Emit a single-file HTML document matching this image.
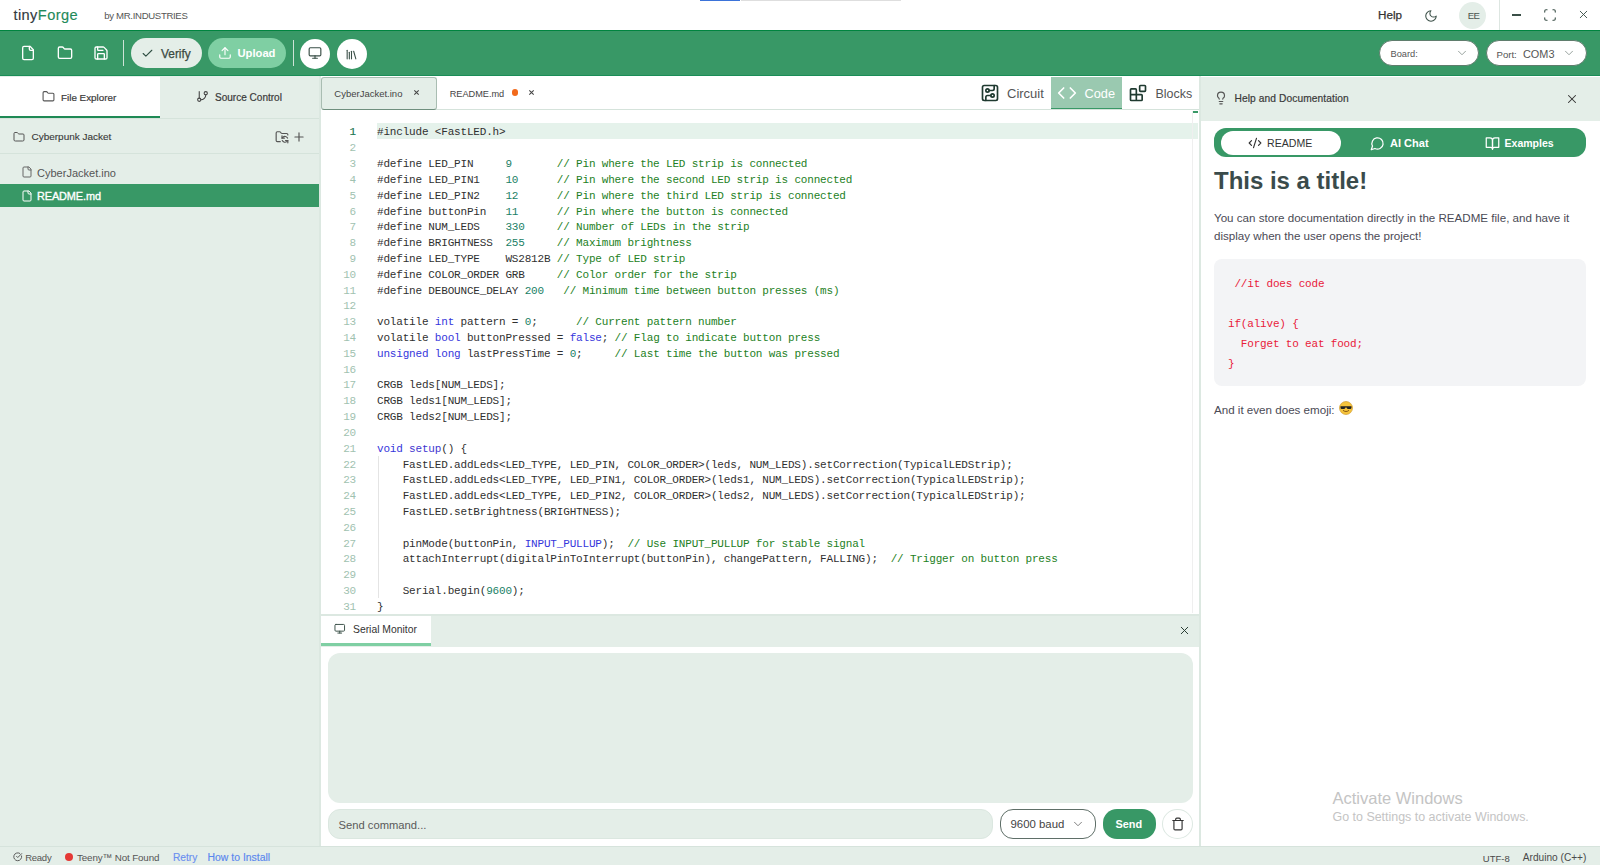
<!DOCTYPE html>
<html><head><meta charset="utf-8"><title>tinyForge</title>
<style>
html,body{margin:0;padding:0;width:1600px;height:865px;overflow:hidden;background:#fff;position:relative;font-family:'Liberation Sans', sans-serif}
.t{position:absolute;white-space:pre;line-height:normal}
.b{position:absolute}
.i{position:absolute;overflow:visible}
</style></head><body>
<div class="b" style="left:700px;top:0px;width:40px;height:1px;background:#3b73d9"></div>
<div class="b" style="left:741px;top:0px;width:160px;height:1px;background:#dedede"></div>
<div class="t" style="left:13.50px;top:7.09px;font-size:14.6px;color:#333a40;font-weight:400;font-family:'Liberation Sans', sans-serif;-webkit-text-stroke:0.15px;letter-spacing:0.4px">tiny<span style="color:#1f8a5a">Forge</span></div>
<div class="t" style="left:104.30px;top:10.11px;font-size:9.6px;color:#555;font-weight:400;font-family:'Liberation Sans', sans-serif;letter-spacing:-0.33px">by MR.INDUSTRIES</div>
<div class="t" style="left:1378.00px;top:8.19px;font-size:11.67px;color:#333;font-weight:400;font-family:'Liberation Sans', sans-serif;-webkit-text-stroke:0.25px">Help</div>
<svg class="i" style="left:1424px;top:8.5px;" width="14" height="14" viewBox="0 0 24 24" fill="none" stroke="#3a4f47" stroke-width="1.8" stroke-linecap="round" stroke-linejoin="round"><path d="M12 3a6 6 0 0 0 9 9 9 9 0 1 1-9-9Z"/></svg>
<div class="b" style="left:1459px;top:2px;width:27px;height:27px;background:#e4eee8;border-radius:50%"></div>
<div class="t" style="left:1467.80px;top:9.91px;font-size:9.6px;color:#4a5550;font-weight:400;font-family:'Liberation Sans', sans-serif;letter-spacing:-0.6px">EE</div>
<div class="b" style="left:1499px;top:0px;width:1px;height:30px;background:#dde6e1"></div>
<div class="b" style="left:1512px;top:14.3px;width:9px;height:1.3px;background:#3a4f47"></div>
<svg class="i" style="left:1543px;top:8px;" width="14" height="14" viewBox="0 0 24 24" fill="none" stroke="#3a4f47" stroke-width="1.9" stroke-linecap="round" stroke-linejoin="round"><path d="M3 7V5a2 2 0 0 1 2-2h2"/><path d="M17 3h2a2 2 0 0 1 2 2v2"/><path d="M21 17v2a2 2 0 0 1-2 2h-2"/><path d="M7 21H5a2 2 0 0 1-2-2v-2"/></svg>
<svg class="i" style="left:1577px;top:8px;" width="13" height="13" viewBox="0 0 24 24" fill="none" stroke="#3a4f47" stroke-width="1.7" stroke-linecap="round" stroke-linejoin="round"><path d="M18 6 6 18"/><path d="m6 6 12 12"/></svg>
<div class="b" style="left:0px;top:30px;width:1600px;height:46px;background:#389866;border-top:1px solid #00843f;border-bottom:1px solid #1a8d57;box-sizing:border-box"></div>
<svg class="i" style="left:20px;top:45px;" width="16" height="16" viewBox="0 0 24 24" fill="none" stroke="#fff" stroke-width="2" stroke-linecap="round" stroke-linejoin="round"><path d="M15 2H6a2 2 0 0 0-2 2v16a2 2 0 0 0 2 2h12a2 2 0 0 0 2-2V7Z"/><path d="M14 2v4a2 2 0 0 0 2 2h4"/></svg>
<svg class="i" style="left:57px;top:45px;" width="16" height="16" viewBox="0 0 24 24" fill="none" stroke="#fff" stroke-width="2" stroke-linecap="round" stroke-linejoin="round"><path d="M20 20a2 2 0 0 0 2-2V8a2 2 0 0 0-2-2h-7.9a2 2 0 0 1-1.69-.9L9.6 3.9A2 2 0 0 0 7.93 3H4a2 2 0 0 0-2 2v13a2 2 0 0 0 2 2Z"/></svg>
<svg class="i" style="left:93px;top:45px;" width="16" height="16" viewBox="0 0 24 24" fill="none" stroke="#fff" stroke-width="2" stroke-linecap="round" stroke-linejoin="round"><path d="M15.2 3a2 2 0 0 1 1.4.6l3.8 3.8a2 2 0 0 1 .6 1.4V19a2 2 0 0 1-2 2H5a2 2 0 0 1-2-2V5a2 2 0 0 1 2-2z"/><path d="M17 21v-7a1 1 0 0 0-1-1H8a1 1 0 0 0-1 1v7"/><path d="M7 3v4a1 1 0 0 0 1 1h7"/></svg>
<div class="b" style="left:123px;top:40px;width:1px;height:26px;background:#cfe3d7"></div>
<div class="b" style="left:131px;top:38px;width:71px;height:30px;background:#e4eee8;border-radius:15px"></div>
<svg class="i" style="left:141px;top:47px;" width="13" height="13" viewBox="0 0 24 24" fill="none" stroke="#2f4f43" stroke-width="2" stroke-linecap="round" stroke-linejoin="round"><path d="M20 6 9 17l-5-5"/></svg>
<div class="t" style="left:161.00px;top:46.63px;font-size:11.9px;color:#3a4a42;font-weight:400;font-family:'Liberation Sans', sans-serif;-webkit-text-stroke:0.25px;letter-spacing:0px">Verify</div>
<div class="b" style="left:208px;top:38px;width:78px;height:30px;background:#7fcfa3;border-radius:15px"></div>
<svg class="i" style="left:218px;top:46px;" width="14" height="14" viewBox="0 0 24 24" fill="none" stroke="#fff" stroke-width="2" stroke-linecap="round" stroke-linejoin="round"><path d="M21 15v4a2 2 0 0 1-2 2H5a2 2 0 0 1-2-2v-4"/><polyline points="17 8 12 3 7 8"/><line x1="12" x2="12" y1="3" y2="15"/></svg>
<div class="t" style="left:237.50px;top:47.05px;font-size:11.21px;color:#fff;font-weight:700;font-family:'Liberation Sans', sans-serif;">Upload</div>
<div class="b" style="left:293px;top:40px;width:1px;height:26px;background:#cfe3d7"></div>
<div class="b" style="left:299.8px;top:38.5px;width:30.2px;height:30.2px;background:#fff;border-radius:50%"></div>
<svg class="i" style="left:308px;top:46.2px;" width="14" height="14" viewBox="0 0 24 24" fill="none" stroke="#3a4f47" stroke-width="2" stroke-linecap="round" stroke-linejoin="round"><rect width="20" height="14" x="2" y="3" rx="2"/><line x1="8" x2="16" y1="21" y2="21"/><line x1="12" x2="12" y1="17" y2="21"/></svg>
<div class="b" style="left:336.5px;top:38.5px;width:30.2px;height:30.2px;background:#fff;border-radius:50%"></div>
<svg class="i" style="left:344.9px;top:47.5px;" width="13" height="13" viewBox="0 0 24 24" fill="none" stroke="#3a4f47" stroke-width="2" stroke-linecap="round" stroke-linejoin="round"><path d="m16 6 4 14"/><path d="M12 6v14"/><path d="M8 8v12"/><path d="M4 4v16"/></svg>
<div class="b" style="left:1379px;top:40.3px;width:100px;height:26.2px;background:#fff;border-radius:13px;border:1px solid #5f7d6d;box-sizing:border-box"></div>
<div class="t" style="left:1390.50px;top:49.31px;font-size:9.27px;color:#555;font-weight:400;font-family:'Liberation Sans', sans-serif;">Board:</div>
<svg class="i" style="left:1455px;top:46px;" width="14" height="14" viewBox="0 0 24 24" fill="none" stroke="#8a9690" stroke-width="1.5" stroke-linecap="round" stroke-linejoin="round"><path d="m6 9 6 6 6-6"/></svg>
<div class="b" style="left:1486px;top:40.3px;width:100.5px;height:26.2px;background:#fff;border-radius:13px;border:1px solid #5f7d6d;box-sizing:border-box"></div>
<div class="t" style="left:1496.50px;top:49.00px;font-size:9.61px;color:#555;font-weight:400;font-family:'Liberation Sans', sans-serif;">Port:</div>
<div class="t" style="left:1523.00px;top:47.84px;font-size:10.9px;color:#555;font-weight:400;font-family:'Liberation Sans', sans-serif;">COM3</div>
<svg class="i" style="left:1562px;top:46px;" width="14" height="14" viewBox="0 0 24 24" fill="none" stroke="#8a9690" stroke-width="1.5" stroke-linecap="round" stroke-linejoin="round"><path d="m6 9 6 6 6-6"/></svg>
<div class="b" style="left:0px;top:76px;width:320px;height:770px;background:#e4eee8"></div>
<div class="b" style="left:0px;top:77px;width:160px;height:41px;background:#fff"></div>
<div class="b" style="left:0px;top:116px;width:160px;height:2px;background:#1f8a55"></div>
<div class="b" style="left:0px;top:118px;width:320px;height:1px;background:#d5e3db"></div>
<svg class="i" style="left:42px;top:90px;" width="13" height="13" viewBox="0 0 24 24" fill="none" stroke="#555" stroke-width="2" stroke-linecap="round" stroke-linejoin="round"><path d="M20 20a2 2 0 0 0 2-2V8a2 2 0 0 0-2-2h-7.9a2 2 0 0 1-1.69-.9L9.6 3.9A2 2 0 0 0 7.93 3H4a2 2 0 0 0-2 2v13a2 2 0 0 0 2 2Z"/></svg>
<div class="t" style="left:61.00px;top:91.89px;font-size:9.85px;color:#3a3a3a;font-weight:400;font-family:'Liberation Sans', sans-serif;-webkit-text-stroke:0.2px">File Explorer</div>
<svg class="i" style="left:196px;top:90px;" width="13" height="13" viewBox="0 0 24 24" fill="none" stroke="#444" stroke-width="2" stroke-linecap="round" stroke-linejoin="round"><line x1="6" x2="6" y1="3" y2="15"/><circle cx="18" cy="6" r="3"/><circle cx="6" cy="18" r="3"/><path d="M18 9a9 9 0 0 1-9 9"/></svg>
<div class="t" style="left:215.00px;top:91.71px;font-size:10.04px;color:#3a3a3a;font-weight:400;font-family:'Liberation Sans', sans-serif;-webkit-text-stroke:0.2px">Source Control</div>
<svg class="i" style="left:13px;top:131px;" width="12" height="12" viewBox="0 0 24 24" fill="none" stroke="#555" stroke-width="2" stroke-linecap="round" stroke-linejoin="round"><path d="M20 20a2 2 0 0 0 2-2V8a2 2 0 0 0-2-2h-7.9a2 2 0 0 1-1.69-.9L9.6 3.9A2 2 0 0 0 7.93 3H4a2 2 0 0 0-2 2v13a2 2 0 0 0 2 2Z"/></svg>
<div class="t" style="left:31.50px;top:131.48px;font-size:9.97px;color:#3a3a3a;font-weight:400;font-family:'Liberation Sans', sans-serif;-webkit-text-stroke:0.12px">Cyberpunk Jacket</div>
<svg class="i" style="left:275px;top:130px;" width="14" height="14" viewBox="0 0 24 24" fill="none" stroke="#555" stroke-width="2" stroke-linecap="round" stroke-linejoin="round"><path d="M9 20H4a2 2 0 0 1-2-2V5a2 2 0 0 1 2-2h3.9a2 2 0 0 1 1.69.9l.81 1.2a2 2 0 0 0 1.67.9H20a2 2 0 0 1 2 2v.5"/><path d="M12 10v4h4"/><path d="m12 14 1.535-1.605a5 5 0 0 1 8 1.5"/><path d="M22 22v-4h-4"/><path d="m22 18-1.535 1.605a5 5 0 0 1-8-1.5"/></svg>
<svg class="i" style="left:292px;top:130px;" width="14" height="14" viewBox="0 0 24 24" fill="none" stroke="#555" stroke-width="2" stroke-linecap="round" stroke-linejoin="round"><path d="M5 12h14"/><path d="M12 5v14"/></svg>
<div class="b" style="left:0px;top:153px;width:320px;height:1px;background:#d5e3db"></div>
<svg class="i" style="left:21px;top:166px;" width="12" height="12" viewBox="0 0 24 24" fill="none" stroke="#666" stroke-width="2" stroke-linecap="round" stroke-linejoin="round"><path d="M15 2H6a2 2 0 0 0-2 2v16a2 2 0 0 0 2 2h12a2 2 0 0 0 2-2V7Z"/><path d="M14 2v4a2 2 0 0 0 2 2h4"/></svg>
<div class="t" style="left:37.00px;top:166.53px;font-size:11.02px;color:#555;font-weight:400;font-family:'Liberation Sans', sans-serif;">CyberJacket.ino</div>
<div class="b" style="left:0px;top:184px;width:320px;height:23px;background:#389866"></div>
<svg class="i" style="left:21px;top:190px;" width="12" height="12" viewBox="0 0 24 24" fill="none" stroke="#fff" stroke-width="2" stroke-linecap="round" stroke-linejoin="round"><path d="M15 2H6a2 2 0 0 0-2 2v16a2 2 0 0 0 2 2h12a2 2 0 0 0 2-2V7Z"/><path d="M14 2v4a2 2 0 0 0 2 2h4"/></svg>
<div class="t" style="left:37.00px;top:189.64px;font-size:10.9px;color:#fff;font-weight:400;font-family:'Liberation Sans', sans-serif;-webkit-text-stroke:0.35px;letter-spacing:-0.1px">README.md</div>
<div class="b" style="left:319px;top:76px;width:2px;height:770px;background:#dce8e1"></div>
<div class="b" style="left:321px;top:76px;width:878px;height:538px;background:#fff"></div>
<div class="b" style="left:321px;top:77px;width:116px;height:32.5px;background:#e4eee8;border:1px solid #a9bdb2;border-bottom:1.5px solid #6f8f7e;border-radius:3px;box-sizing:border-box"></div>
<div class="t" style="left:334.30px;top:88.39px;font-size:9.51px;color:#444;font-weight:400;font-family:'Liberation Sans', sans-serif;">CyberJacket.ino</div>
<svg class="i" style="left:414px;top:90.2px" width="5" height="5" viewBox="0 0 5 5"><path d="M0.3 0.3L4.7 4.7M4.7 0.3L0.3 4.7" stroke="#444" stroke-width="1.05"/></svg>
<div class="t" style="left:449.70px;top:88.69px;font-size:9.18px;color:#444;font-weight:400;font-family:'Liberation Sans', sans-serif;">README.md</div>
<div class="b" style="left:511.6px;top:89.3px;width:6.8px;height:6.8px;background:#f26a1b;border-radius:50%"></div>
<svg class="i" style="left:528.8px;top:90.2px" width="5" height="5" viewBox="0 0 5 5"><path d="M0.3 0.3L4.7 4.7M4.7 0.3L0.3 4.7" stroke="#444" stroke-width="1.05"/></svg>
<div class="b" style="left:436px;top:109px;width:763px;height:1px;background:#d5e3db"></div>
<svg class="i" style="left:980px;top:83.4px;" width="20" height="20" viewBox="0 0 24 24" fill="none" stroke="#1f3a30" stroke-width="2" stroke-linecap="round" stroke-linejoin="round"><rect width="18" height="18" x="3" y="3" rx="2"/><path d="M11 9h4a2 2 0 0 0 2-2V3"/><circle cx="9" cy="9" r="2"/><path d="M7 21v-4a2 2 0 0 1 2-2h4"/><circle cx="15" cy="15" r="2"/></svg>
<div class="t" style="left:1007.00px;top:86.24px;font-size:12.99px;color:#555;font-weight:400;font-family:'Liberation Sans', sans-serif;">Circuit</div>
<div class="b" style="left:1051px;top:77px;width:70.5px;height:32px;background:#9ac9b0;border-bottom:1.5px solid #389866;box-sizing:border-box"></div>
<svg class="i" style="left:1057.3px;top:83px;" width="20" height="20" viewBox="0 0 24 24" fill="none" stroke="#fff" stroke-width="2" stroke-linecap="round" stroke-linejoin="round"><polyline points="16 18 22 12 16 6"/><polyline points="8 6 2 12 8 18"/></svg>
<div class="t" style="left:1084.50px;top:86.45px;font-size:12.76px;color:#fff;font-weight:400;font-family:'Liberation Sans', sans-serif;">Code</div>
<svg class="i" style="left:1128.1px;top:83.4px;" width="20" height="20" viewBox="0 0 24 24" fill="none" stroke="#1f3a30" stroke-width="2" stroke-linecap="round" stroke-linejoin="round"><rect width="7" height="7" x="14" y="3" rx="1"/><path d="M10 21V8a1 1 0 0 0-1-1H4a1 1 0 0 0-1 1v12a1 1 0 0 0 1 1h12a1 1 0 0 0 1-1v-5a1 1 0 0 0-1-1H3"/></svg>
<div class="t" style="left:1155.50px;top:86.72px;font-size:12.46px;color:#555;font-weight:400;font-family:'Liberation Sans', sans-serif;">Blocks</div>
<div class="b" style="left:377px;top:123px;width:821px;height:16px;background:#e5f2eb"></div>
<div class="b" style="left:1192px;top:111px;width:1px;height:502px;background:#efefef"></div>
<div class="b" style="left:1192.5px;top:111px;width:5.5px;height:1.5px;background:#389866"></div>
<div class="b" style="left:377.5px;top:455.5px;width:1px;height:142.5px;background:#e4e4e4"></div>
<div class="t" style="left:330px;top:125.46px;width:26px;text-align:right;font-family:'Liberation Mono', monospace;font-size:11px;line-height:15.81px;color:#9fc2b0;letter-spacing:-0.18px"><div>1</div><div>2</div><div>3</div><div>4</div><div>5</div><div>6</div><div>7</div><div>8</div><div>9</div><div>10</div><div>11</div><div>12</div><div>13</div><div>14</div><div>15</div><div>16</div><div>17</div><div>18</div><div>19</div><div>20</div><div>21</div><div>22</div><div>23</div><div>24</div><div>25</div><div>26</div><div>27</div><div>28</div><div>29</div><div>30</div><div>31</div></div>
<div class="t" style="left:330px;top:125.46px;width:26px;text-align:right;font-family:'Liberation Mono', monospace;font-size:11px;line-height:15.81px;color:#237a57;letter-spacing:-0.18px">1</div>
<div class="t" style="left:377px;top:125.46px;font-family:'Liberation Mono', monospace;font-size:11px;line-height:15.81px;color:#303030;letter-spacing:-0.18px;white-space:pre"><div>#include &lt;FastLED.h&gt;</div><div>&#8203;</div><div>#define LED_PIN     <span style="color:#1a7f66">9</span>       <span style="color:#1d7f24">// Pin where the LED strip is connected</span></div><div>#define LED_PIN1    <span style="color:#1a7f66">10</span>      <span style="color:#1d7f24">// Pin where the second LED strip is connected</span></div><div>#define LED_PIN2    <span style="color:#1a7f66">12</span>      <span style="color:#1d7f24">// Pin where the third LED strip is connected</span></div><div>#define buttonPin   <span style="color:#1a7f66">11</span>      <span style="color:#1d7f24">// Pin where the button is connected</span></div><div>#define NUM_LEDS    <span style="color:#1a7f66">330</span>     <span style="color:#1d7f24">// Number of LEDs in the strip</span></div><div>#define BRIGHTNESS  <span style="color:#1a7f66">255</span>     <span style="color:#1d7f24">// Maximum brightness</span></div><div>#define LED_TYPE    WS2812B <span style="color:#1d7f24">// Type of LED strip</span></div><div>#define COLOR_ORDER GRB     <span style="color:#1d7f24">// Color order for the strip</span></div><div>#define DEBOUNCE_DELAY <span style="color:#1a7f66">200</span>   <span style="color:#1d7f24">// Minimum time between button presses (ms)</span></div><div>&#8203;</div><div>volatile <span style="color:#3636dc">int</span> pattern = <span style="color:#1a7f66">0</span>;      <span style="color:#1d7f24">// Current pattern number</span></div><div>volatile <span style="color:#3636dc">bool</span> buttonPressed = <span style="color:#3636dc">false</span>; <span style="color:#1d7f24">// Flag to indicate button press</span></div><div><span style="color:#3636dc">unsigned long</span> lastPressTime = <span style="color:#1a7f66">0</span>;     <span style="color:#1d7f24">// Last time the button was pressed</span></div><div>&#8203;</div><div>CRGB leds[NUM_LEDS];</div><div>CRGB leds1[NUM_LEDS];</div><div>CRGB leds2[NUM_LEDS];</div><div>&#8203;</div><div><span style="color:#3636dc">void</span> <span style="color:#3f36d0">setup</span>() {</div><div>    FastLED.addLeds&lt;LED_TYPE, LED_PIN, COLOR_ORDER&gt;(leds, NUM_LEDS).setCorrection(TypicalLEDStrip);</div><div>    FastLED.addLeds&lt;LED_TYPE, LED_PIN1, COLOR_ORDER&gt;(leds1, NUM_LEDS).setCorrection(TypicalLEDStrip);</div><div>    FastLED.addLeds&lt;LED_TYPE, LED_PIN2, COLOR_ORDER&gt;(leds2, NUM_LEDS).setCorrection(TypicalLEDStrip);</div><div>    FastLED.setBrightness(BRIGHTNESS);</div><div>&#8203;</div><div>    pinMode(buttonPin, <span style="color:#3636dc">INPUT_PULLUP</span>);  <span style="color:#1d7f24">// Use INPUT_PULLUP for stable signal</span></div><div>    attachInterrupt(digitalPinToInterrupt(buttonPin), changePattern, FALLING);  <span style="color:#1d7f24">// Trigger on button press</span></div><div>&#8203;</div><div>    Serial.begin(<span style="color:#1a7f66">9600</span>);</div><div>}</div></div>
<div class="b" style="left:321px;top:614px;width:878px;height:2px;background:#dce8e1"></div>
<div class="b" style="left:321px;top:616px;width:878px;height:31px;background:#e4eee8"></div>
<div class="b" style="left:321px;top:616px;width:110px;height:27px;background:#fff"></div>
<div class="b" style="left:321px;top:643px;width:110px;height:2.5px;background:#7fcfa3"></div>
<svg class="i" style="left:333.9px;top:623px;" width="11.5" height="11.5" viewBox="0 0 24 24" fill="none" stroke="#3a4f47" stroke-width="2" stroke-linecap="round" stroke-linejoin="round"><rect width="20" height="14" x="2" y="3" rx="2"/><line x1="8" x2="16" y1="21" y2="21"/><line x1="12" x2="12" y1="17" y2="21"/></svg>
<div class="t" style="left:353.00px;top:623.82px;font-size:10.37px;color:#333;font-weight:400;font-family:'Liberation Sans', sans-serif;">Serial Monitor</div>
<svg class="i" style="left:1178px;top:624px;" width="13" height="13" viewBox="0 0 24 24" fill="none" stroke="#24392f" stroke-width="1.8" stroke-linecap="round" stroke-linejoin="round"><path d="M18 6 6 18"/><path d="m6 6 12 12"/></svg>
<div class="b" style="left:321px;top:647px;width:878px;height:199px;background:#fff"></div>
<div class="b" style="left:327.5px;top:653px;width:865px;height:149.5px;background:#e4eee8;border-radius:12px"></div>
<div class="b" style="left:327.5px;top:809px;width:665.5px;height:30px;background:#e4eee8;border-radius:12px;border:1px solid #dbe7e0;box-sizing:border-box"></div>
<div class="t" style="left:338.50px;top:819.14px;font-size:11.23px;color:#5a5a5a;font-weight:400;font-family:'Liberation Sans', sans-serif;">Send command...</div>
<div class="b" style="left:1000px;top:809px;width:95.5px;height:30px;background:#fff;border-radius:13px;border:1px solid #5f6f68;box-sizing:border-box"></div>
<div class="t" style="left:1010.50px;top:817.78px;font-size:11.4px;color:#444;font-weight:400;font-family:'Liberation Sans', sans-serif;">9600 baud</div>
<svg class="i" style="left:1071px;top:817px;" width="14" height="14" viewBox="0 0 24 24" fill="none" stroke="#777" stroke-width="1.6" stroke-linecap="round" stroke-linejoin="round"><path d="m6 9 6 6 6-6"/></svg>
<div class="b" style="left:1102.5px;top:809px;width:53px;height:30px;background:#389866;border-radius:14px"></div>
<div class="t" style="left:1115.50px;top:818.15px;font-size:10.88px;color:#fff;font-weight:700;font-family:'Liberation Sans', sans-serif;">Send</div>
<div class="b" style="left:1162px;top:809px;width:30.5px;height:30px;background:#fff;border-radius:50%;border:1px solid #dde8e2;box-sizing:border-box"></div>
<svg class="i" style="left:1170.5px;top:817px;" width="14" height="14" viewBox="0 0 24 24" fill="none" stroke="#333" stroke-width="2" stroke-linecap="round" stroke-linejoin="round"><path d="M3 6h18"/><path d="M19 6v14c0 1-1 2-2 2H7c-1 0-2-1-2-2V6"/><path d="M8 6V4c0-1 1-2 2-2h4c1 0 2 1 2 2v2"/></svg>
<div class="b" style="left:1199px;top:76px;width:2px;height:770px;background:#dce8e1"></div>
<div class="b" style="left:1201px;top:76px;width:399px;height:770px;background:#fff"></div>
<div class="b" style="left:1201px;top:77px;width:399px;height:44px;background:#e4eee8"></div>
<svg class="i" style="left:1214px;top:91px;" width="14" height="14" viewBox="0 0 24 24" fill="none" stroke="#555" stroke-width="2" stroke-linecap="round" stroke-linejoin="round"><path d="M15 14c.2-1 .7-1.7 1.5-2.5 1-.9 1.5-2.2 1.5-3.5A6 6 0 0 0 6 8c0 1 .2 2.2 1.5 3.5.7.7 1.3 1.5 1.5 2.5"/><path d="M9 18h6"/><path d="M10 22h4"/></svg>
<div class="t" style="left:1234.50px;top:93.37px;font-size:10.2px;color:#3a3a3a;font-weight:400;font-family:'Liberation Sans', sans-serif;-webkit-text-stroke:0.2px;letter-spacing:0.1px">Help and Documentation</div>
<svg class="i" style="left:1564.5px;top:92px;" width="14" height="14" viewBox="0 0 24 24" fill="none" stroke="#333" stroke-width="1.8" stroke-linecap="round" stroke-linejoin="round"><path d="M18 6 6 18"/><path d="m6 6 12 12"/></svg>
<div class="b" style="left:1214px;top:128px;width:372px;height:29px;background:#389866;border-radius:12px"></div>
<div class="b" style="left:1221px;top:131px;width:120px;height:24px;background:#fff;border-radius:12px"></div>
<svg class="i" style="left:1248px;top:136px;" width="14" height="14" viewBox="0 0 24 24" fill="none" stroke="#333" stroke-width="2" stroke-linecap="round" stroke-linejoin="round"><path d="m18 16 4-4-4-4"/><path d="m6 8-4 4 4 4"/><path d="m14.5 4-5 16"/></svg>
<div class="t" style="left:1267.00px;top:136.82px;font-size:10.59px;color:#333;font-weight:400;font-family:'Liberation Sans', sans-serif;">README</div>
<svg class="i" style="left:1370px;top:135.5px;" width="15" height="15" viewBox="0 0 24 24" fill="none" stroke="#fff" stroke-width="2" stroke-linecap="round" stroke-linejoin="round"><path d="M7.9 20A9 9 0 1 0 4 16.1L2 22Z"/></svg>
<div class="t" style="left:1390.00px;top:136.72px;font-size:11.03px;color:#fff;font-weight:700;font-family:'Liberation Sans', sans-serif;">AI Chat</div>
<svg class="i" style="left:1485px;top:135.5px;" width="15" height="15" viewBox="0 0 24 24" fill="none" stroke="#fff" stroke-width="2" stroke-linecap="round" stroke-linejoin="round"><path d="M2 3h6a4 4 0 0 1 4 4v14a3 3 0 0 0-3-3H2z"/><path d="M22 3h-6a4 4 0 0 0-4 4v14a3 3 0 0 1 3-3h7z"/></svg>
<div class="t" style="left:1504.50px;top:137.16px;font-size:10.54px;color:#fff;font-weight:700;font-family:'Liberation Sans', sans-serif;">Examples</div>
<div class="t" style="left:1214.00px;top:167.30px;font-size:23.98px;color:#3a4b4b;font-weight:700;font-family:'Liberation Sans', sans-serif;">This is a title!</div>
<div class="t" style="left:1214.00px;top:210.80px;font-size:11.6px;color:#4a4a55;font-weight:400;font-family:'Liberation Sans', sans-serif;">You can store documentation directly in the README file, and have it</div>
<div class="t" style="left:1214.00px;top:229.20px;font-size:11.6px;color:#4a4a55;font-weight:400;font-family:'Liberation Sans', sans-serif;">display when the user opens the project!</div>
<div class="b" style="left:1214px;top:259px;width:372px;height:126.5px;background:#f3f4f6;border-radius:8px"></div>
<div class="t" style="left:1228.00px;top:277.84px;font-size:11px;color:#e9203a;font-weight:400;font-family:'Liberation Mono', monospace;white-space:pre;letter-spacing:-0.18px"> //it does code</div>
<div class="t" style="left:1228.00px;top:317.84px;font-size:11px;color:#e9203a;font-weight:400;font-family:'Liberation Mono', monospace;white-space:pre;letter-spacing:-0.18px">if(alive) {</div>
<div class="t" style="left:1228.00px;top:337.84px;font-size:11px;color:#e9203a;font-weight:400;font-family:'Liberation Mono', monospace;white-space:pre;letter-spacing:-0.18px">  Forget to eat food;</div>
<div class="t" style="left:1228.00px;top:357.84px;font-size:11px;color:#e9203a;font-weight:400;font-family:'Liberation Mono', monospace;white-space:pre;letter-spacing:-0.18px">}</div>
<div class="t" style="left:1214.00px;top:402.50px;font-size:11.6px;color:#4a4a55;font-weight:400;font-family:'Liberation Sans', sans-serif;">And it even does emoji: </div>
<svg class="i" style="left:1339px;top:401px" width="14" height="14" viewBox="0 0 14 14"><circle cx="7" cy="7" r="6.5" fill="#f5c33b" stroke="#c98e1a" stroke-width="0.6"/><path d="M1.5 5.2h11v1.2c0 1-0.8 1.7-1.8 1.7h-1.4c-0.9 0-1.6-0.8-1.7-1.6h-1.2c-0.1 0.8-0.8 1.6-1.7 1.6H3.3c-1 0-1.8-0.7-1.8-1.7z" fill="#222"/><path d="M4.3 9.6c1.5 1.3 3.9 1.3 5.4 0" stroke="#6b3d0a" stroke-width="0.8" fill="none" stroke-linecap="round"/></svg>
<div class="t" style="left:1332.50px;top:789.07px;font-size:16.5px;color:#c4c4c4;font-weight:400;font-family:'Liberation Sans', sans-serif;">Activate Windows</div>
<div class="t" style="left:1332.50px;top:810.33px;font-size:12.45px;color:#c4c4c4;font-weight:400;font-family:'Liberation Sans', sans-serif;">Go to Settings to activate Windows.</div>
<div class="b" style="left:0px;top:846px;width:1600px;height:19px;background:#e4eee8;border-top:1px solid #d6e3dc;box-sizing:border-box"></div>
<svg class="i" style="left:12.5px;top:852px;" width="9.5" height="9.5" viewBox="0 0 24 24" fill="none" stroke="#555" stroke-width="2.4" stroke-linecap="round" stroke-linejoin="round"><path d="M21.801 10A10 10 0 1 1 17 3.335"/><path d="m9 11 3 3L22 4"/></svg>
<div class="t" style="left:25.20px;top:852.20px;font-size:9.5px;color:#555;font-weight:400;font-family:'Liberation Sans', sans-serif;letter-spacing:-0.25px">Ready</div>
<div class="b" style="left:65px;top:852.6px;width:8px;height:8px;background:#e53935;border-radius:50%"></div>
<div class="t" style="left:77.00px;top:851.93px;font-size:9.8px;color:#555;font-weight:400;font-family:'Liberation Sans', sans-serif;letter-spacing:-0.13px">Teeny™ Not Found</div>
<div class="t" style="left:173.00px;top:851.77px;font-size:10.2px;color:#6a8ff0;font-weight:400;font-family:'Liberation Sans', sans-serif;-webkit-text-stroke:0.15px">Retry</div>
<div class="t" style="left:207.50px;top:851.54px;font-size:10.45px;color:#5b87ee;font-weight:400;font-family:'Liberation Sans', sans-serif;-webkit-text-stroke:0.15px">How to Install</div>
<div class="t" style="left:1482.80px;top:852.70px;font-size:9.5px;color:#4a4a4a;font-weight:400;font-family:'Liberation Sans', sans-serif;">UTF-8</div>
<div class="t" style="left:1522.80px;top:852.13px;font-size:10.13px;color:#4a4a4a;font-weight:400;font-family:'Liberation Sans', sans-serif;">Arduino (C++)</div>
</body></html>
